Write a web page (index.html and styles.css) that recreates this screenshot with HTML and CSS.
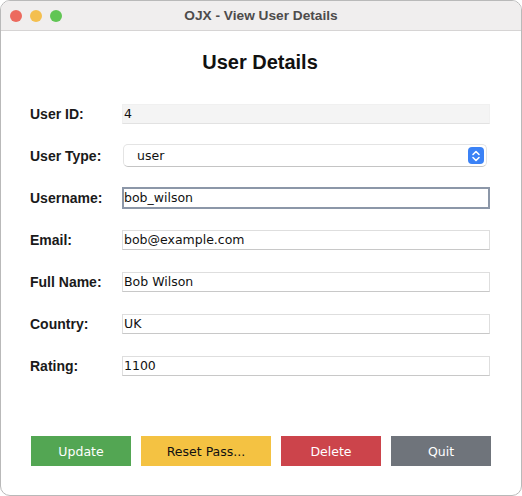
FILE: index.html
```html
<!DOCTYPE html>
<html>
<head>
<meta charset="utf-8">
<link rel="stylesheet" href="styles.css">
</head>
<body>
<div class="window">
  <div class="titlebar">
    <div class="lights">
      <span class="light red"></span>
      <span class="light yellow"></span>
      <span class="light green"></span>
    </div>
    <div class="title">OJX - View User Details</div>
  </div>
  <div class="content">
    <h1 class="heading">User Details</h1>
    <div class="form">
      <div class="row">
        <label class="label">User ID:</label>
        <div class="field readonly">4</div>
      </div>
      <div class="row">
        <label class="label">User Type:</label>
        <div class="select">
          <span class="select-text">user</span>
          <span class="stepper">
            <svg width="14" height="16" viewBox="0 0 14 16"><path d="M4 6.5 L7 3.5 L10 6.5 M4 9.5 L7 12.5 L10 9.5" fill="none" stroke="#fff" stroke-width="1.6" stroke-linecap="round" stroke-linejoin="round"/></svg>
          </span>
        </div>
      </div>
      <div class="row">
        <label class="label">Username:</label>
        <div class="field focused">bob_wilson</div>
      </div>
      <div class="row">
        <label class="label">Email:</label>
        <div class="field">bob@example.com</div>
      </div>
      <div class="row">
        <label class="label">Full Name:</label>
        <div class="field">Bob Wilson</div>
      </div>
      <div class="row">
        <label class="label">Country:</label>
        <div class="field">UK</div>
      </div>
      <div class="row">
        <label class="label">Rating:</label>
        <div class="field">1100</div>
      </div>
    </div>
    <div class="buttons">
      <button class="btn btn-green">Update</button>
      <button class="btn btn-yellow wide">Reset Pass...</button>
      <button class="btn btn-red">Delete</button>
      <button class="btn btn-gray">Quit</button>
    </div>
  </div>
</div>
</body>
</html>
```
FILE: styles.css
```css
html, body {
  margin: 0;
  padding: 0;
  background: #ffffff;
}
.window {
  width: 522px;
  height: 496px;
  box-sizing: border-box;
  border: 1px solid #b9b9b9;
  border-radius: 10px;
  overflow: hidden;
  background: #ffffff;
  display: flex;
  flex-direction: column;
}
.titlebar {
  height: 29px;
  flex: 0 0 29px;
  background: #f0eeee;
  border-bottom: 1px solid #d6d4d4;
  display: flex;
  align-items: center;
  position: relative;
}
.lights {
  display: flex;
  gap: 8px;
  padding-left: 9px;
}
.light {
  width: 12px;
  height: 12px;
  border-radius: 50%;
  display: block;
}
.light.red { background: #ec6a5e; }
.light.yellow { background: #f4bf4f; }
.light.green { background: #61c554; }
.title {
  position: absolute;
  left: 0;
  right: 0;
  top: 0;
  height: 29px;
  line-height: 29px;
  text-align: center;
  font-family: "Liberation Sans", Arial, sans-serif;
  font-weight: bold;
  font-size: 13.7px;
  color: #4d4b4b;
}
.content {
  flex: 1;
  display: flex;
  flex-direction: column;
  padding: 0 31px 0 29px;
}
.heading {
  margin: 19px 0 0 0;
  text-align: center;
  font-family: "Liberation Sans", Arial, sans-serif;
  font-weight: bold;
  font-size: 20px;
  line-height: 24px;
  color: #111;
}
.form {
  margin-top: 29px;
  display: flex;
  flex-direction: column;
  gap: 21px;
}
.row {
  display: flex;
  align-items: center;
  height: 21px;
}
.label {
  width: 92px;
  flex: 0 0 92px;
  font-family: "Liberation Sans", Arial, sans-serif;
  font-weight: bold;
  font-size: 14px;
  color: #1a1a1a;
}
.field {
  flex: 1;
  box-sizing: border-box;
  height: 20px;
  border: 1px solid #dedede;
  border-bottom-color: #c8c8c8;
  padding: 0 1px;
  font-family: "DejaVu Sans", sans-serif;
  font-size: 12.5px;
  line-height: 18px;
  color: #111;
  background: #fff;
}
.field.readonly {
  background: #f4f4f4;
  border-color: #f0f0f0;
  border-bottom-color: #e2e2e2;
}
.field.focused {
  height: 22px;
  border: 2px solid #8c97a8;
  padding: 0 0;
}
.select {
  flex: 1;
  margin-left: 1px;
  margin-right: 3px;
  box-sizing: border-box;
  height: 23px;
  border: 1px solid #e4e4e4;
  border-bottom-color: #c4c4c4;
  border-radius: 5px;
  display: flex;
  align-items: center;
  justify-content: space-between;
  padding: 0 2px 0 13px;
  font-family: "DejaVu Sans", sans-serif;
  font-size: 12.5px;
  color: #111;
  background: #fff;
}
.stepper {
  width: 16px;
  height: 17px;
  border-radius: 4px;
  background: #3b82f6;
  display: flex;
  align-items: center;
  justify-content: center;
}
.stepper svg { display: block; }
.buttons {
  margin-top: auto;
  margin-bottom: 29px;
  display: flex;
  gap: 10px;
  padding-left: 1px;
}
.btn {
  flex: 0 0 100px;
  width: 100px;
  height: 30px;
  border: none;
  margin: 0;
  padding: 0;
  font-family: "DejaVu Sans", sans-serif;
  font-size: 12.5px;
  color: #ffffff;
  cursor: pointer;
}
.btn.wide { flex: 0 0 130px; width: 130px; }
.btn-green { background: #53a653; }
.btn-yellow { background: #f4c242; color: #111; }
.btn-red { background: #cc444b; }
.btn-gray { background: #6f747b; }
```
